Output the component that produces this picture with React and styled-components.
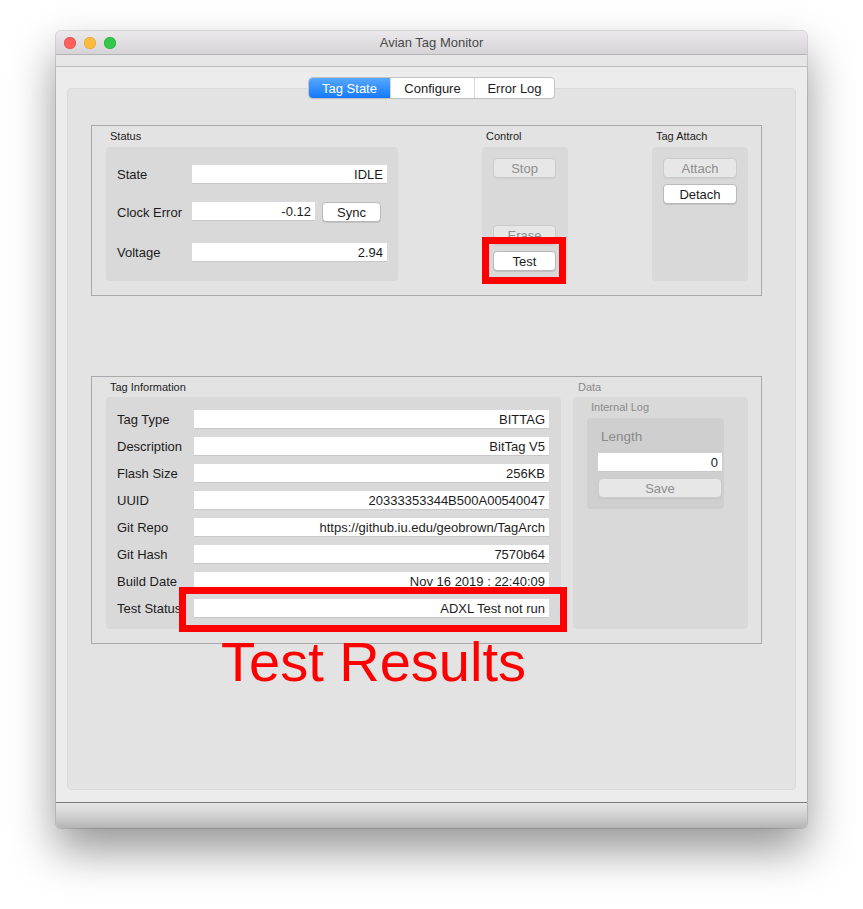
import React from 'react';
import styled, { createGlobalStyle } from 'styled-components';

const GlobalStyle = createGlobalStyle`
  html, body {
    margin: 0;
    padding: 0;
    background: #ffffff;
  }
  body {
    font-family: "Liberation Sans", Arial, sans-serif;
    color: #1c1c1c;
  }
`;

const Page = styled.div`
  position: relative;
  width: 863px;
  height: 909px;
  padding: 31px 0 0 56px;
  box-sizing: border-box;
  overflow: hidden;
`;

const Window = styled.div`
  width: 751px;
  height: 797px;
  display: flex;
  flex-direction: column;
  border-radius: 5px;
  background: #ececec;
  box-shadow: 0 22px 45px rgba(0, 0, 0, 0.42), 0 0 0 1px rgba(0, 0, 0, 0.12);
  overflow: hidden;
`;

const TitleBar = styled.div`
  height: 23px;
  flex: none;
  display: flex;
  align-items: center;
  padding: 0 8px;
  background: linear-gradient(#ebe9eb, #d5d3d5);
  border-bottom: 1px solid #b4b4b4;
`;

const Lights = styled.div`
  display: flex;
  gap: 8px;
`;

const Light = styled.span`
  width: 12px;
  height: 12px;
  border-radius: 50%;
  background: ${(p) => p.color};
  box-shadow: inset 0 0 0 0.5px ${(p) => p.edge};
`;

const Title = styled.div`
  flex: 1;
  text-align: center;
  font-size: 13px;
  color: #4a4a4a;
  margin-right: 52px;
`;

const Strip = styled.div`
  height: 11px;
  flex: none;
  background: #e6e6e6;
  border-bottom: 1px solid #bdbdbd;
`;

const Content = styled.div`
  flex: 1;
  padding: 11px 11px 12px;
  display: flex;
  flex-direction: column;
  align-items: center;
`;

const BottomBar = styled.div`
  height: 25px;
  flex: none;
  border-top: 1px solid #7a7a7a;
  background: linear-gradient(#e6e6e6, #cfcfcf 55%, #b4b4b4);
`;

const Tabs = styled.div`
  display: flex;
  height: 20px;
  margin-bottom: -10px;
  z-index: 1;
  border-radius: 4px;
  box-shadow: 0 0 0 1px #c2c2c2, 0 1px 1px rgba(0, 0, 0, 0.12);
  overflow: hidden;
`;

const Tab = styled.div`
  width: ${(p) => p.w}px;
  display: flex;
  align-items: center;
  justify-content: center;
  font-size: 13px;
  color: ${(p) => (p.active ? '#ffffff' : '#1c1c1c')};
  background: ${(p) => (p.active ? 'linear-gradient(#56a8ff, #1579fa)' : '#ffffff')};
  border-left: ${(p) => (p.first ? 'none' : '1px solid #d6d6d6')};
`;

const Panel = styled.div`
  align-self: stretch;
  height: 702px;
  box-sizing: border-box;
  background: #e3e3e3;
  border: 1px solid #dadada;
  border-radius: 4px;
  padding: 36px 33px 0 23px;
`;

const Group = styled.div`
  height: ${(p) => p.h}px;
  margin-top: ${(p) => p.top || 0}px;
  box-sizing: border-box;
  border: 1px solid #a9a9a9;
  padding: 0 13px 14px 14px;
  display: flex;
  justify-content: space-between;
`;

const Section = styled.div`
  width: ${(p) => p.w}px;
  display: flex;
  flex-direction: column;
`;

const SectionTitle = styled.div`
  font-size: 11px;
  height: ${(p) => p.h || 21}px;
  line-height: ${(p) => p.h || 21}px;
  padding-left: ${(p) => p.indent || 4}px;
  color: ${(p) => (p.muted ? '#8a8a8a' : '#1c1c1c')};
`;

const Box = styled.div`
  flex: 1;
  background: #d9d9d9;
  border-radius: 4px;
  display: flex;
  flex-direction: column;
  padding: ${(p) => p.pad};
  box-sizing: border-box;
`;

const LogBox = styled.div`
  height: 91px;
  background: #cfcfcf;
  border-radius: 4px;
  display: flex;
  flex-direction: column;
  padding: 10px 2px 10px 11px;
  box-sizing: border-box;
`;

const LogLabel = styled.div`
  font-size: 13.5px;
  line-height: 17px;
  color: #8a8a8a;
  padding-left: 3px;
  margin-bottom: 8px;
`;

const Row = styled.div`
  display: grid;
  grid-template-columns: ${(p) => p.label}px 1fr;
  align-items: center;
  height: 19px;
  margin-top: ${(p) => p.mt || 0}px;
`;

const Label = styled.div`
  font-size: 13px;
  white-space: nowrap;
`;

const Field = styled.div`
  height: 19px;
  width: ${(p) => (p.w ? `${p.w}px` : 'auto')};
  box-sizing: border-box;
  background: #ffffff;
  border-bottom: 1px solid #c9c9c9;
  font-size: 13px;
  line-height: 19px;
  text-align: right;
  padding-right: 4px;
  white-space: nowrap;
  overflow: hidden;
`;

const Inline = styled.div`
  display: flex;
  gap: 7px;
`;

const Button = styled.div`
  height: 20px;
  width: ${(p) => (p.w ? `${p.w}px` : 'auto')};
  margin-top: ${(p) => p.mt || 0}px;
  box-sizing: border-box;
  border-radius: 4px;
  display: flex;
  align-items: center;
  justify-content: center;
  font-size: 13px;
  background: ${(p) => (p.disabled ? '#e7e7e7' : '#ffffff')};
  color: ${(p) => (p.disabled ? '#8e8e8e' : '#1c1c1c')};
  border: 1px solid ${(p) => (p.disabled ? '#cbcbcb' : '#b9b9b9')};
  box-shadow: 0 1px 0 ${(p) => (p.disabled ? 'rgba(0,0,0,0.04)' : 'rgba(0,0,0,0.1)')};
`;

const Stack = styled.div`
  display: flex;
  flex-direction: column;
  gap: 6px;
  margin-top: ${(p) => (p.push ? 'auto' : '0')};
`;

const InfoRows = styled(Box)`
  gap: 8px;
`;

const Annotation = styled.div`
  position: absolute;
  left: ${(p) => p.x}px;
  top: ${(p) => p.y}px;
  width: ${(p) => p.w}px;
  height: ${(p) => p.h}px;
  box-sizing: border-box;
  border: 7px solid #ff0000;
  pointer-events: none;
`;

const Caption = styled.div`
  position: absolute;
  left: 221px;
  top: 630px;
  font-size: 56px;
  line-height: 64px;
  color: #ff0000;
  white-space: nowrap;
`;

const info = [
  ['Tag Type', 'BITTAG'],
  ['Description', 'BitTag V5'],
  ['Flash Size', '256KB'],
  ['UUID', '20333353344B500A00540047'],
  ['Git Repo', 'https://github.iu.edu/geobrown/TagArch'],
  ['Git Hash', '7570b64'],
  ['Build Date', 'Nov 16 2019 : 22:40:09'],
  ['Test Status', 'ADXL Test not run'],
];

export default function App() {
  return (
    <Page>
      <GlobalStyle />
      <Window>
        <TitleBar>
          <Lights>
            <Light color="#fc605c" edge="#de4b47" />
            <Light color="#fdbc40" edge="#dea236" />
            <Light color="#34c84a" edge="#27aa37" />
          </Lights>
          <Title>Avian Tag Monitor</Title>
        </TitleBar>
        <Strip />
        <Content>
          <Tabs>
            <Tab w={81} active first>Tag State</Tab>
            <Tab w={83}>Configure</Tab>
            <Tab w={79}>Error Log</Tab>
          </Tabs>
          <Panel>
            <Group h={171}>
              <Section w={292}>
                <SectionTitle>Status</SectionTitle>
                <Box pad="18px 11px 19px">
                  <Row label={75}>
                    <Label>State</Label>
                    <Field>IDLE</Field>
                  </Row>
                  <Row label={75} mt={18}>
                    <Label>Clock Error</Label>
                    <Inline>
                      <Field w={123}>-0.12</Field>
                      <Button w={59}>Sync</Button>
                    </Inline>
                  </Row>
                  <Row label={75} mt={22}>
                    <Label>Voltage</Label>
                    <Field>2.94</Field>
                  </Row>
                </Box>
              </Section>
              <Section w={86}>
                <SectionTitle>Control</SectionTitle>
                <Box pad="11px 12px 10px 11px">
                  <Button disabled>Stop</Button>
                  <Stack push>
                    <Button disabled>Erase</Button>
                    <Button>Test</Button>
                  </Stack>
                </Box>
              </Section>
              <Section w={96}>
                <SectionTitle>Tag Attach</SectionTitle>
                <Box pad="11px 11px">
                  <Stack>
                    <Button disabled>Attach</Button>
                    <Button>Detach</Button>
                  </Stack>
                </Box>
              </Section>
            </Group>
            <Group h={268} top={80}>
              <Section w={455}>
                <SectionTitle h={20}>Tag Information</SectionTitle>
                <InfoRows pad="13px 12px 11px 11px">
                  {info.map(([k, v]) => (
                    <Row key={k} label={77}>
                      <Label>{k}</Label>
                      <Field>{v}</Field>
                    </Row>
                  ))}
                </InfoRows>
              </Section>
              <Section w={175}>
                <SectionTitle h={20} muted indent={5}>Data</SectionTitle>
                <Box pad="0 24px 0 14px">
                  <SectionTitle muted indent={4}>Internal Log</SectionTitle>
                  <LogBox>
                    <LogLabel>Length</LogLabel>
                    <Field>0</Field>
                    <Button disabled mt={6}>Save</Button>
                  </LogBox>
                </Box>
              </Section>
            </Group>
          </Panel>
        </Content>
        <BottomBar />
      </Window>
      <Annotation x={482} y={237} w={84} h={47} />
      <Annotation x={179} y={587} w={388} h={45} />
      <Caption>Test Results</Caption>
    </Page>
  );
}
